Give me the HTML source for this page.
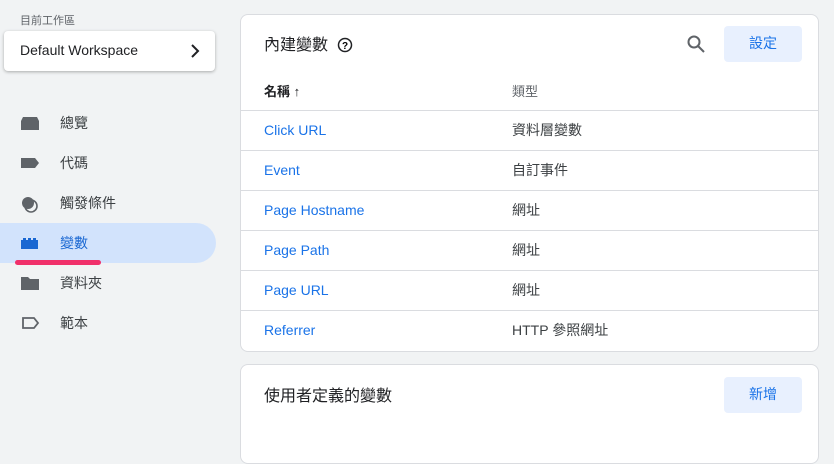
<!DOCTYPE html><html><head><meta charset="utf-8"><style>
body{margin:0;width:834px;height:444px;background:#f1f3f4;font-family:"Liberation Sans","Noto Sans CJK TC",sans-serif;position:relative;overflow:hidden;color:#202124}
.abs{position:absolute}
.ws{left:4px;top:31px;width:211px;height:40px;background:#fff;border-radius:4px;box-shadow:0 1px 3px rgba(0,0,0,.3)}
.nav{left:0;width:216px;height:40px;font-size:14px;color:#3c4043}
.nav span{position:absolute;left:60px;top:10px}
.nav svg{position:absolute;left:20px;top:12px}
.card{left:240px;width:579px;background:#fff;border:1px solid #dadce0;border-radius:8px;box-sizing:border-box}
.row{position:absolute;left:0;right:0;height:40px;border-top:1px solid #dadce0;font-size:14px}
.row .n{position:absolute;left:23px;top:11px;color:#1a73e8}
.row .t{position:absolute;left:271px;top:9px;color:#3c4043}
.btn{background:#e8f0fe;color:#1a73e8;border-radius:4px;font-size:14px;text-align:center;line-height:34px;width:78px;height:36px}
</style></head><body>
<div class="abs" style="left:20px;top:12px;font-size:11px;color:#5f6368">目前工作區</div>
<div class="abs ws"><span class="abs" style="left:16px;top:11px;font-size:14px">Default Workspace</span>
<svg class="abs" style="left:186px;top:13px" width="10" height="14"><path d="M2 1l6 6-6 6" stroke="#202124" stroke-width="2" fill="none"/></svg></div>
<div class="abs nav" style="top:103px"><svg width="20" height="16"><path d="M3 2h14l2 4v9H1V6z" fill="#5f6368"/></svg><span>總覽</span></div>
<div class="abs nav" style="top:143px"><svg width="20" height="16"><path d="M1 3h14l4 5-4 5H1z" fill="#5f6368"/></svg><span>代碼</span></div>
<div class="abs nav" style="top:183px"><svg width="20" height="18"><circle cx="8" cy="8" r="6" fill="#5f6368"/><circle cx="11" cy="11" r="6" fill="none" stroke="#5f6368" stroke-width="1.6"/></svg><span>觸發條件</span></div>
<div class="abs nav" style="top:223px;background:#d2e3fc;border-radius:0 20px 20px 0;color:#1967d2"><svg width="20" height="16"><path d="M1 5h2V3h3v2h2V3h3v2h2V3h3v2h2v9H1z" fill="#1967d2"/></svg><span>變數</span></div>
<div class="abs" style="left:15px;top:260px;width:86px;height:5px;background:#f0306a;border-radius:3px"></div>
<div class="abs nav" style="top:263px"><svg width="20" height="16"><path d="M1 2h7l2 2h9v11H1z" fill="#5f6368"/></svg><span>資料夾</span></div>
<div class="abs nav" style="top:303px"><svg width="20" height="16"><path d="M3 3h11l4 5-4 5H3z" fill="none" stroke="#5f6368" stroke-width="1.8"/></svg><span>範本</span></div>

<div class="abs card" style="top:14px;height:338px">
<div class="abs" style="left:23px;top:16px;font-size:16px">內建變數</div>
<svg class="abs" style="left:96px;top:22px" width="16" height="16"><circle cx="8" cy="8" r="6.5" fill="none" stroke="#202124" stroke-width="1.5"/><text x="8" y="12" font-size="10" text-anchor="middle" font-family="Liberation Sans" font-weight="bold">?</text></svg>
<svg class="abs" style="left:445px;top:19px" width="20" height="20"><circle cx="8" cy="8" r="5.5" fill="none" stroke="#5f6368" stroke-width="2"/><path d="M12 12l6 6" stroke="#5f6368" stroke-width="2"/></svg>
<div class="abs btn" style="left:483px;top:11px">設定</div>
<div class="abs" style="left:23px;top:66px;font-size:13px;font-weight:bold">名稱 ↑</div>
<div class="abs" style="left:271px;top:66px;font-size:13px;color:#5f6368">類型</div>
<div class="row" style="top:95px"><span class="n">Click URL</span><span class="t">資料層變數</span></div>
<div class="row" style="top:135px"><span class="n">Event</span><span class="t">自訂事件</span></div>
<div class="row" style="top:175px"><span class="n">Page Hostname</span><span class="t">網址</span></div>
<div class="row" style="top:215px"><span class="n">Page Path</span><span class="t">網址</span></div>
<div class="row" style="top:255px"><span class="n">Page URL</span><span class="t">網址</span></div>
<div class="row" style="top:295px"><span class="n">Referrer</span><span class="t">HTTP 參照網址</span></div>
</div>
<div class="abs card" style="top:364px;height:100px">
<div class="abs" style="left:23px;top:17px;font-size:16px">使用者定義的變數</div>
<div class="abs btn" style="left:483px;top:12px">新增</div>
</div>
</body></html>
